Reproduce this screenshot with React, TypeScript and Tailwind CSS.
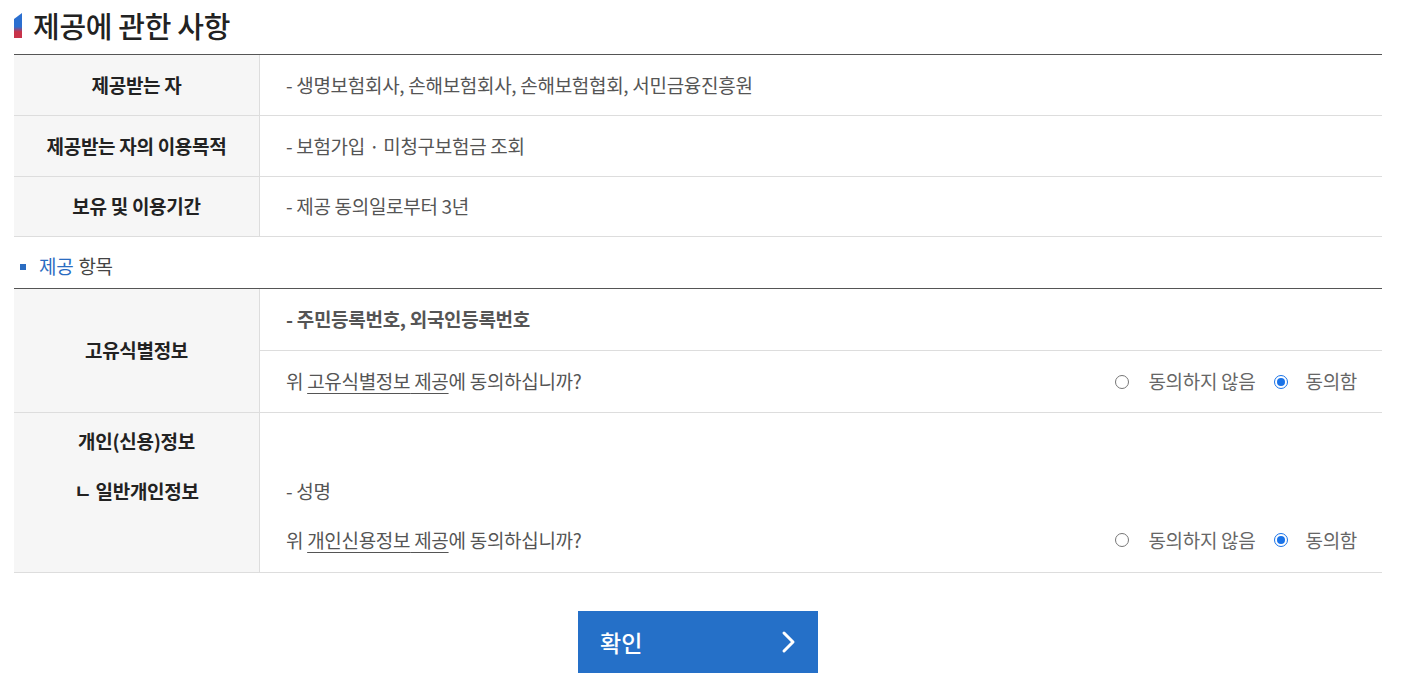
import { ReactNode } from 'react';

const font = { fontFamily: '"Noto Sans CJK KR", "Noto Sans", sans-serif' };

function Radio({ checked }: { checked?: boolean }) {
  if (checked) {
    return (
      <span className="w-[14px] h-[14px] rounded-full border border-[#1a73e8] flex items-center justify-center bg-white">
        <span className="w-[8px] h-[8px] rounded-full bg-[#1a73e8]" />
      </span>
    );
  }
  return <span className="w-[14px] h-[14px] rounded-full border border-[#767676] bg-white" />;
}

function Agree() {
  return (
    <div className="flex items-center text-[19px] tracking-[-0.3px] text-[#666]">
      <Radio />
      <span className="ml-[19px]">동의하지 않음</span>
      <span className="ml-[19px]">
        <Radio checked />
      </span>
      <span className="ml-[17px]">동의함</span>
    </div>
  );
}

function Question({ item }: { item: string }) {
  return (
    <div className="flex items-center justify-between pl-[26px] pr-[25px]">
      <p className="text-[19px] tracking-[-0.3px] text-[#555]">
        위 <span className="underline underline-offset-[4px]">{item} 제공</span>에 동의하십니까?
      </p>
      <Agree />
    </div>
  );
}

function Row({ label, children }: { label: ReactNode; children: ReactNode }) {
  return (
    <div className="grid grid-cols-[246px_1fr] border-b border-[#dddddd]">
      <div className="bg-[#f6f6f6] border-r border-[#dddddd] flex items-center justify-center text-[19px] tracking-[-0.3px] font-bold text-[#222]">
        {label}
      </div>
      {children}
    </div>
  );
}

const cell = 'flex items-center pl-[26px] text-[19px] tracking-[-0.3px] text-[#555]';

export default function App() {
  return (
    <div className="min-h-screen bg-white pl-[14px] pr-[20px]" style={font}>
      <h2 className="flex items-center gap-[11px] pt-[8px] h-[54px] pb-[12px]">
        <svg width="8" height="25" viewBox="0 0 8 25">
          <defs>
            <linearGradient id="tg" x1="0" y1="0" x2="0" y2="1">
              <stop offset="0" stopColor="#2b6fd0" />
              <stop offset="0.55" stopColor="#2b6fd0" />
              <stop offset="0.75" stopColor="#c8334a" />
              <stop offset="1" stopColor="#c8334a" />
            </linearGradient>
          </defs>
          <polygon points="0,6 8,0 8,25 0,25" fill="url(#tg)" />
        </svg>
        <span className="text-[29px] font-medium tracking-[-0.3px] text-[#222] leading-[34px]">제공에 관한 사항</span>
      </h2>

      <div className="border-t border-[#555]">
        <Row label="제공받는 자">
          <div className={`h-[60px] ${cell}`}>- 생명보험회사, 손해보험회사, 손해보험협회, 서민금융진흥원</div>
        </Row>
        <Row label="제공받는 자의 이용목적">
          <div className={`h-[60px] ${cell}`}>- 보험가입 · 미청구보험금 조회</div>
        </Row>
        <Row label="보유 및 이용기간">
          <div className={`h-[59px] ${cell}`}>- 제공 동의일로부터 3년</div>
        </Row>
      </div>

      <div className="flex items-center h-[51px] pt-[8px] pl-[6px] tracking-[-0.3px]">
        <span className="w-[6px] h-[6px] bg-[#2a6cc1] mr-[13px]" />
        <span className="text-[19px] text-[#2a6cc1]">제공</span>
        <span className="text-[19px] text-[#444] ml-[5px]">항목</span>
      </div>

      <div className="border-t border-[#555]">
        <Row label="고유식별정보">
          <div className="flex flex-col">
            <div className={`h-[62px] border-b border-[#dddddd] font-bold ${cell} text-[#333]`}>
              - 주민등록번호, 외국인등록번호
            </div>
            <div className="h-[61px] flex flex-col justify-center">
              <Question item="고유식별정보" />
            </div>
          </div>
        </Row>
        <div className="grid grid-cols-[246px_1fr] border-b border-[#dddddd]">
          <div className="bg-[#f6f6f6] border-r border-[#dddddd] flex flex-col items-center pt-[16px] gap-[26px] text-[19px] tracking-[-0.3px] font-bold text-[#222] leading-[24px]">
            <span>개인(신용)정보</span>
            <span>ㄴ 일반개인정보</span>
          </div>
          <div className="flex flex-col h-[159px] pt-[66px] leading-[24px]">
            <div className="pl-[26px] text-[19px] tracking-[-0.3px] text-[#555]">- 성명</div>
            <div className="mt-[25px]">
              <Question item="개인신용정보" />
            </div>
          </div>
        </div>
      </div>

      <div className="flex justify-center pt-[38px]">
        <button className="w-[240px] h-[62px] bg-[#2570c8] flex items-center justify-between pl-[22px] pr-[21px] text-white text-[23px] font-medium">
          <span>확인</span>
          <svg width="16" height="24" viewBox="0 0 16 24" fill="none">
            <polyline points="3,3 12,12 3,21" stroke="white" strokeWidth="3" strokeLinecap="round" strokeLinejoin="round" />
          </svg>
        </button>
      </div>
    </div>
  );
}
